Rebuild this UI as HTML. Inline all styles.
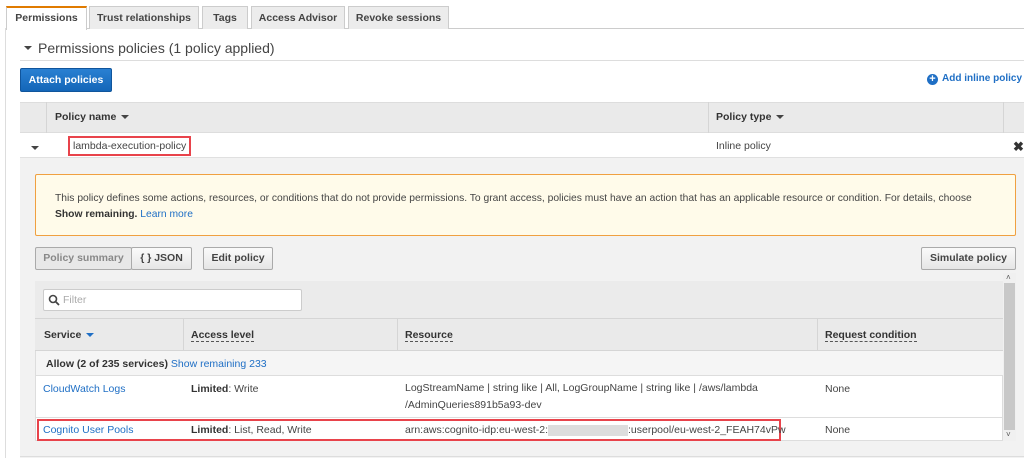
<!DOCTYPE html>
<html><head><meta charset="utf-8"><style>
*{box-sizing:border-box;margin:0;padding:0}
body{width:1024px;height:458px;overflow:hidden;background:#fff;font-family:"Liberation Sans",Arial,sans-serif;font-size:10.5px;color:#444;position:relative}
.a{position:absolute;white-space:nowrap}
.tab{position:absolute;top:6px;height:23px;background:#ececec;border:1px solid #ccc;border-bottom:none;font-weight:bold;color:#444;text-align:center;line-height:22px;font-size:10.5px}
.b{font-weight:bold;color:#333}
.lnk{color:#1f6fc5}
.btn{position:absolute;height:23px;border:1px solid #aaa;border-radius:2px;background:linear-gradient(#fafafa,#e6e6e6);font-weight:bold;color:#444;text-align:center;line-height:21px;white-space:nowrap}
.dot{border-bottom:1px dashed #555}
.car{display:inline-block;width:0;height:0;border-left:4px solid transparent;border-right:4px solid transparent;border-top:4px solid #444;vertical-align:middle;margin-left:5px}
</style></head><body>
<div class="a" style="left:5px;top:28px;width:1019px;height:1px;background:#ccc"></div>
<div class="a" style="left:5px;top:28px;width:1px;height:430px;background:#ddd"></div>
<div class="tab" style="left:6px;width:81px;background:#fff;border-top:2px solid #e07b00;height:24px;line-height:20px">Permissions</div>
<div class="tab" style="left:89px;width:110px">Trust relationships</div>
<div class="tab" style="left:202px;width:46px">Tags</div>
<div class="tab" style="left:251px;width:94px">Access Advisor</div>
<div class="tab" style="left:348px;width:101px">Revoke sessions</div>

<div class="a" style="left:24px;top:46px;border-left:4px solid transparent;border-right:4px solid transparent;border-top:4px solid #444"></div>
<div class="a" style="left:38px;top:40px;font-size:14px;color:#444">Permissions policies (1 policy applied)</div>
<div class="a" style="left:20px;top:60px;width:1004px;height:1px;background:#ddd"></div>

<div class="a" style="left:20px;top:68px;width:92px;height:24px;border-radius:2px;background:linear-gradient(#2a80d2,#1466b8);border:1px solid #10559c;color:#fff;font-weight:bold;text-align:center;line-height:22px">Attach policies</div>
<div class="a" style="left:927px;top:74px;width:11px;height:11px;border-radius:50%;background:#1f6fc5;color:#fff;font-weight:bold;font-size:11px;line-height:11px;text-align:center">+</div>
<div class="a b" style="left:942px;top:73px;color:#1f6fc5;font-size:10px">Add inline policy</div>

<div class="a" style="left:20px;top:102px;width:1004px;height:31px;background:#eaeaea;border-top:1px solid #ddd;border-bottom:1px solid #ddd"></div>
<div class="a" style="left:46px;top:102px;width:1px;height:31px;background:#d5d5d5"></div>
<div class="a" style="left:708px;top:102px;width:1px;height:31px;background:#d5d5d5"></div>
<div class="a" style="left:1003px;top:102px;width:1px;height:31px;background:#d5d5d5"></div>
<div class="a b" style="left:55px;top:111px">Policy name<span class="car"></span></div>
<div class="a b" style="left:716px;top:111px">Policy type<span class="car"></span></div>
<div class="a" style="left:31px;top:146px;border-left:4px solid transparent;border-right:4px solid transparent;border-top:4px solid #444"></div>
<div class="a" style="left:68px;top:136px;width:123px;height:20px;border:2px solid #e8434b"></div>
<div class="a" style="left:73px;top:140px">lambda-execution-policy</div>
<div class="a" style="left:716px;top:140px">Inline policy</div>
<div class="a b" style="left:1013px;top:139px;font-size:13px;color:#333">✖</div>

<div class="a" style="left:20px;top:157px;width:1004px;height:301px;background:#f2f2f2;border-top:1px solid #e0e0e0"></div>
<div class="a" style="left:35px;top:174px;width:981px;height:62px;background:#fffbea;border:1px solid #f0a040;border-radius:2px"></div>
<div class="a" style="left:55px;top:191px;color:#444;line-height:16px;font-size:10.3px">This policy defines some actions, resources, or conditions that do not provide permissions. To grant access, policies must have an action that has an applicable resource or condition. For details, choose<br><b class="b">Show remaining.</b> <span class="lnk">Learn more</span></div>

<div class="btn" style="left:35px;top:247px;width:97px;background:#e8e8e8;color:#888">Policy summary</div>
<div class="btn" style="left:131px;top:247px;width:61px">{ } JSON</div>
<div class="btn" style="left:203px;top:247px;width:70px">Edit policy</div>
<div class="btn" style="left:921px;top:247px;width:95px">Simulate policy</div>

<div class="a" style="left:35px;top:281px;width:968px;height:160px;background:#fff;border:1px solid #ddd"></div>
<div class="a" style="left:35px;top:281px;width:968px;height:38px;background:#ebebeb;border-bottom:1px solid #d5d5d5"></div>
<div class="a" style="left:43px;top:289px;width:259px;height:22px;background:#fff;border:1px solid #ccc;border-radius:2px"></div>
<svg class="a" style="left:48px;top:294px" width="12" height="12" viewBox="0 0 12 12"><circle cx="5" cy="5" r="3.5" fill="none" stroke="#444" stroke-width="1.6"/><line x1="7.5" y1="7.5" x2="11" y2="11" stroke="#444" stroke-width="1.8"/></svg>
<div class="a" style="left:63px;top:294px;color:#aaa">Filter</div>
<div class="a" style="left:35px;top:319px;width:968px;height:32px;background:#eaeaea;border-bottom:1px solid #d5d5d5"></div>
<div class="a" style="left:183px;top:319px;width:1px;height:32px;background:#d5d5d5"></div>
<div class="a" style="left:397px;top:319px;width:1px;height:32px;background:#d5d5d5"></div>
<div class="a" style="left:817px;top:319px;width:1px;height:32px;background:#d5d5d5"></div>
<div class="a b" style="left:44px;top:329px">Service<span class="car" style="border-top-color:#1f6fc5"></span></div>
<div class="a b" style="left:191px;top:329px"><span class="dot">Access level</span></div>
<div class="a b" style="left:405px;top:329px"><span class="dot">Resource</span></div>
<div class="a b" style="left:825px;top:329px"><span class="dot">Request condition</span></div>
<div class="a" style="left:36px;top:351px;width:967px;height:25px;background:#f5f5f5;border-bottom:1px solid #ddd"></div>
<div class="a" style="left:46px;top:358px"><b class="b">Allow (2 of 235 services)</b> <span class="lnk">Show remaining 233</span></div>
<div class="a lnk" style="left:43px;top:383px">CloudWatch Logs</div>
<div class="a" style="left:191px;top:383px"><b class="b">Limited</b>: Write</div>
<div class="a" style="left:405px;top:380px;line-height:17px">LogStreamName | string like | All, LogGroupName | string like | /aws/lambda<br>/AdminQueries891b5a93-dev</div>
<div class="a" style="left:825px;top:383px">None</div>
<div class="a" style="left:36px;top:417px;width:967px;height:1px;background:#ddd"></div>
<div class="a" style="left:37px;top:419px;width:744px;height:22px;border:2px solid #e8434b"></div>
<div class="a lnk" style="left:43px;top:424px">Cognito User Pools</div>
<div class="a" style="left:191px;top:424px"><b class="b">Limited</b>: List, Read, Write</div>
<div class="a" style="left:405px;top:424px">arn:aws:cognito-idp:eu-west-2:<span style="display:inline-block;width:80px;height:11px;background:#ddd;vertical-align:middle"></span>:userpool/eu-west-2_FEAH74vPw</div>
<div class="a" style="left:825px;top:424px">None</div>
<div class="a" style="left:1003px;top:273px;width:13px;height:168px;background:#f0f0f0"></div>
<div class="a" style="left:1004px;top:283px;width:11px;height:147px;background:#c8c8c8"></div>
<div class="a" style="left:1006px;top:273px;font-size:8px;color:#555">˄</div>
<div class="a" style="left:1006px;top:430px;font-size:8px;color:#555">˅</div>
<div class="a" style="left:20px;top:456px;width:1004px;height:1px;background:#ddd"></div>
</body></html>
